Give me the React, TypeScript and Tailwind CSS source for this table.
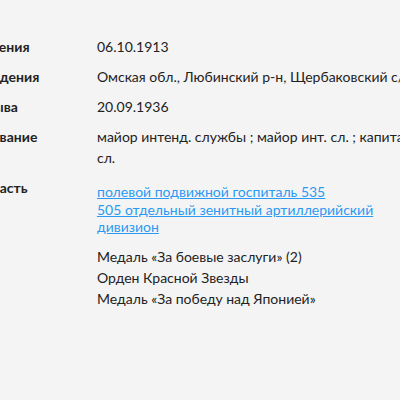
const rows: { label: string; values: React.ReactNode }[] = [
  { label: "Дата рождения", values: "06.10.1913" },
  {
    label: "Место рождения",
    values: "Омская обл., Любинский р-н, Щербаковский с/с",
  },
  { label: "Дата призыва", values: "20.09.1936" },
  {
    label: "Воинское звание",
    values: "майор интенд. службы ; майор инт. сл. ; капитан инт. сл.",
  },
  {
    label: "Воинская часть",
    values: (
      <div className="flex flex-col gap-px pt-[6px] pb-[2px] leading-[17px] max-w-[330px]">
        <a href="#" className="text-[#2b9af3] underline">
          полевой подвижной госпиталь 535
        </a>
        <a href="#" className="text-[#2b9af3] underline">
          505 отдельный зенитный артиллерийский дивизион
        </a>
      </div>
    ),
  },
  {
    label: "Награды",
    values: (
      <div className="flex flex-col">
        <span>Медаль «За боевые заслуги» (2)</span>
        <span>Орден Красной Звезды</span>
        <span>Медаль «За победу над Японией»</span>
      </div>
    ),
  },
];

export default function App() {
  return (
    <div
      className="w-[400px] h-[400px] overflow-hidden bg-[#f4f4f4] text-[#222] text-[14px] leading-[21px]"
      style={{ fontFamily: 'Lato, "Noto Sans", sans-serif' }}
    >
      <div className="ml-[-73px] pt-[36px] flex flex-col gap-[9px] w-[530px]">
        {rows.map((row) => (
          <div key={row.label} className="flex">
            <div className="w-[170px] shrink-0 font-bold">{row.label}</div>
            <div className="w-[352px] shrink-0">{row.values}</div>
          </div>
        ))}
      </div>
    </div>
  );
}
